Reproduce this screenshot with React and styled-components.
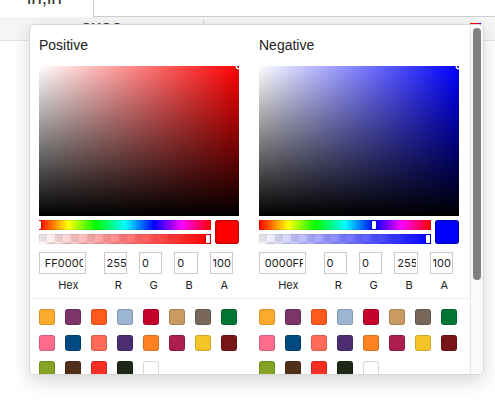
import React from 'react';
import styled, { createGlobalStyle } from 'styled-components';

const Global = createGlobalStyle`
  html, body { margin: 0; padding: 0; height: 100%; background: #fff; }
  body { font-family: "Liberation Sans", Arial, Helvetica, sans-serif; color: #222; }
  #root { height: 100%; }
  * { box-sizing: border-box; }
`;

const Page = styled.div`
  position: relative;
  height: 420px;
  overflow: hidden;
  display: flex;
  flex-direction: column;
  background: #fff;
`;

const TabBar = styled.div`
  display: flex;
  height: 17px;
  flex: none;
`;

const Tab = styled.div`
  width: 94px;
  border-right: 1px solid #cfcfcf;
  display: flex;
  align-items: flex-end;
  padding-left: 27px;
  overflow: hidden;
`;

const TabLabel = styled.span`
  font-size: 19px;
  line-height: 19px;
  margin-bottom: 10px;
  color: #333;
  white-space: nowrap;
`;

const TabFill = styled.div`
  flex: 1;
  border-bottom: 1px solid #cfcfcf;
`;

const Toolbar = styled.div`
  height: 24px;
  flex: none;
  display: flex;
  align-items: flex-start;
  padding: 3px 14px 0 82px;
  background: #f5f5f5;
  border-bottom: 1px solid #e3e3e3;
`;

const ToolTitle = styled.span`
  width: 121px;
  font-size: 13px;
  line-height: 16px;
  font-weight: bold;
  letter-spacing: 1px;
  color: #333;
`;

const ToolDivider = styled.span`
  width: 1px;
  height: 18px;
  background: #d6d6d6;
`;

const ToolSpacer = styled.span`
  flex: 1;
`;

const ScalePreview = styled.span`
  width: 11px;
  height: 12px;
  margin-top: 3px;
  background: linear-gradient(to right, #f00 0 75%, #00f 90%);
`;

const Workspace = styled.div`
  flex: 1;
  background: #fff;
`;

/* floating colour popover */
const Popover = styled.div`
  position: absolute;
  left: 29px;
  top: 24px;
  width: 455px;
  height: 351px;
  display: flex;
  background: #fff;
  border: 1px solid #d7d7d7;
  border-radius: 5px;
  box-shadow: 0 6px 18px rgba(0, 0, 0, 0.16);
  overflow: hidden;
`;

const Viewport = styled.div`
  flex: 1;
  min-width: 0;
  overflow: hidden;
`;

const ScrollTrack = styled.div`
  flex: none;
  width: 13px;
  padding: 3px 2px 0 2px;
  background: #fafafa;
  border-left: 1px solid #e6e6e6;
`;

const ScrollThumb = styled.div`
  width: 8px;
  height: 252px;
  border-radius: 4px;
  background: #7f7f7f;
`;

const Columns = styled.div`
  display: grid;
  grid-template-columns: 200px 200px;
  column-gap: 20px;
  padding: 12px 11px 0 9px;
`;

const Column = styled.div`
  display: flex;
  flex-direction: column;
  min-width: 0;
`;

const Title = styled.div`
  font-size: 14px;
  line-height: 17px;
  margin-bottom: 12px;
  color: #222;
`;

const Saturation = styled.div`
  position: relative;
  height: 150px;
  overflow: hidden;
  background:
    linear-gradient(to top, #000, rgba(0, 0, 0, 0)),
    linear-gradient(to right, #fff, rgba(255, 255, 255, 0)),
    hsl(${(p) => p.$hue}, 100%, 50%);
`;

const SatPointer = styled.div`
  position: absolute;
  width: 4px;
  height: 4px;
  border-radius: 50%;
  transform: translate(-2px, -2px);
  box-shadow: 0 0 0 1.5px #fff, inset 0 0 1px 1px rgba(0, 0, 0, 0.3),
    0 0 1px 2px rgba(0, 0, 0, 0.4);
`;

const Controls = styled.div`
  display: flex;
`;

const Sliders = styled.div`
  flex: 1;
  padding: 4px 0;
`;

const HueBar = styled.div`
  position: relative;
  height: 10px;
  overflow: hidden;
  background: linear-gradient(
    to right,
    #f00 0%, #ff0 17%, #0f0 33%, #0ff 50%, #00f 67%, #f0f 83%, #f00 100%
  );
  box-shadow: inset 0 0 0 1px rgba(0, 0, 0, 0.08);
`;

const AlphaBar = styled.div`
  position: relative;
  height: 10px;
  margin-top: 4px;
  background:
    linear-gradient(to right, rgba(${(p) => p.$rgb}, 0), rgb(${(p) => p.$rgb})),
    repeating-conic-gradient(#fff 0 25%, #e6e6e6 0 50%) 0 0 / 16px 16px;
  box-shadow: inset 0 0 0 1px rgba(0, 0, 0, 0.06);
`;

const SliderPointer = styled.div`
  position: absolute;
  top: 1px;
  width: 4px;
  height: 8px;
  border-radius: 1px;
  background: #fff;
  box-shadow: 0 0 2px rgba(0, 0, 0, 0.6);
`;

const ColorChip = styled.div`
  width: 24px;
  height: 24px;
  margin: 4px 0 0 4px;
  border-radius: 3px;
  background: ${(p) => p.$color};
  box-shadow: inset 0 0 0 1px rgba(0, 0, 0, 0.15), inset 0 0 4px rgba(0, 0, 0, 0.25);
`;

const Fields = styled.div`
  display: flex;
  padding-top: 4px;
  font-family: Inter, "Liberation Sans", Arial, sans-serif;
`;

const Field = styled.label`
  flex: ${(p) => (p.$wide ? 2 : 1)};
  padding-left: ${(p) => (p.$wide ? 0 : 6)}px;
  min-width: 0;
  display: block;
`;

const FieldInput = styled.input`
  display: block;
  width: 80%;
  height: 22px;
  padding: 0 5% 0 10%;
  margin: 0;
  border: none;
  border-radius: 0;
  outline: none;
  background: #fff;
  box-shadow: inset 0 0 0 1px #ccc;
  font-family: inherit;
  font-size: 11px;
  color: #222;
`;

const FieldLabel = styled.span`
  display: block;
  text-align: center;
  font-size: 11px;
  line-height: 17px;
  padding: 3px 0 4px;
  color: #222;
`;

const Presets = styled.div`
  display: flex;
  flex-wrap: wrap;
  margin: 0 -10px;
  padding: 10px 0 0 10px;
  border-top: 1px solid #eee;
`;

const Swatch = styled.div`
  width: 16px;
  height: 16px;
  margin: 0 10px 10px 0;
  border-radius: 3px;
  background: ${(p) => p.$color};
  box-shadow: inset 0 0 0 1px rgba(0, 0, 0, 0.15);
`;

const PRESETS = [
  '#FDAB2C', '#7C3469', '#FE5A1D', '#9CB5D2', '#C4002C', '#C99A62', '#786659', '#017535',
  '#FF6B8C', '#004A80', '#FF6B57', '#4D2D72', '#FF8323', '#AC1E4B', '#F5C429', '#7A1517',
  '#85A325', '#522F1B', '#F92E25', '#1F2716', '#FFFFFF',
];

function ColorColumn({ title, hex, hue, rgb }) {
  const [r, g, b] = rgb;
  return (
    <Column>
      <Title>{title}</Title>
      <Saturation $hue={hue}>
        <SatPointer style={{ left: '100%', top: 0 }} />
      </Saturation>
      <Controls>
        <Sliders>
          <HueBar>
            <SliderPointer style={{ left: `calc(${(hue / 360) * 100}% - 2px)` }} />
          </HueBar>
          <AlphaBar $rgb={`${r}, ${g}, ${b}`}>
            <SliderPointer style={{ left: 'calc(100% - 5px)' }} />
          </AlphaBar>
        </Sliders>
        <ColorChip $color={`#${hex}`} />
      </Controls>
      <Fields>
        <Field $wide>
          <FieldInput defaultValue={hex} />
          <FieldLabel>Hex</FieldLabel>
        </Field>
        <Field>
          <FieldInput defaultValue={r} />
          <FieldLabel>R</FieldLabel>
        </Field>
        <Field>
          <FieldInput defaultValue={g} />
          <FieldLabel>G</FieldLabel>
        </Field>
        <Field>
          <FieldInput defaultValue={b} />
          <FieldLabel>B</FieldLabel>
        </Field>
        <Field>
          <FieldInput defaultValue={100} />
          <FieldLabel>A</FieldLabel>
        </Field>
      </Fields>
      <Presets>
        {PRESETS.map((c, i) => (
          <Swatch key={i} $color={c} title={c} />
        ))}
      </Presets>
    </Column>
  );
}

export default function App() {
  return (
    <>
      <Global />
      <Page>
        <TabBar>
          <Tab>
            <TabLabel>in,in</TabLabel>
          </Tab>
          <TabFill />
        </TabBar>
        <Toolbar>
          <ToolTitle>SVGS</ToolTitle>
          <ToolDivider />
          <ToolSpacer />
          <ScalePreview />
        </Toolbar>
        <Workspace />
        <Popover>
          <Viewport>
            <Columns>
              <ColorColumn title="Positive" hex="FF0000" hue={0} rgb={[255, 0, 0]} />
              <ColorColumn title="Negative" hex="0000FF" hue={240} rgb={[0, 0, 255]} />
            </Columns>
          </Viewport>
          <ScrollTrack>
            <ScrollThumb />
          </ScrollTrack>
        </Popover>
      </Page>
    </>
  );
}
